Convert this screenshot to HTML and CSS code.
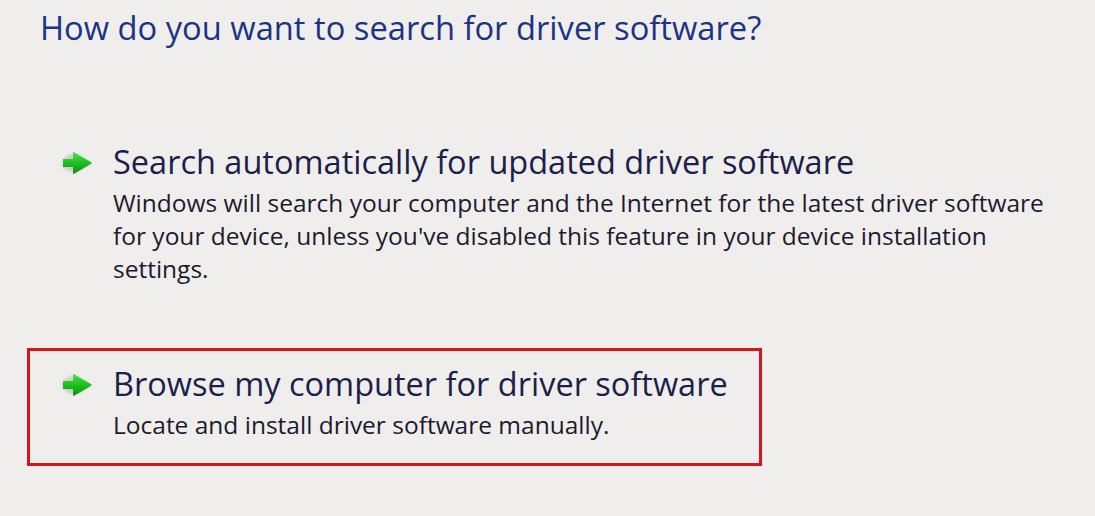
FILE: index.html
```html
<!DOCTYPE html>
<html lang="en">
<head>
    <meta charset="UTF-8">
    <title>Update Driver Software</title>
    <link rel="stylesheet" href="styles.css">
</head>
<body>
    <svg width="0" height="0" class="defs">
        <defs>
            <linearGradient id="arrowFill" x1="0" y1="0" x2="0" y2="1">
                <stop offset="0" stop-color="#4fe04f"/>
                <stop offset="0.5" stop-color="#1dbf1d"/>
                <stop offset="1" stop-color="#0c930c"/>
            </linearGradient>
            <radialGradient id="arrowGlow" cx="0.45" cy="0.5" r="0.5">
                <stop offset="0.6" stop-color="#cfcfcb"/>
                <stop offset="1" stop-color="#efeeec" stop-opacity="0"/>
            </radialGradient>
        </defs>
    </svg>

    <div class="page">
      <h1 class="heading">How do you want to search for driver software?</h1>

      <div class="options">
          <div class="option">
              <svg class="arrow" viewBox="0 0 34 26" width="34" height="26">
                  <ellipse cx="14" cy="13" rx="14" ry="12" fill="url(#arrowGlow)"/>
                  <path d="M3 9 H13 V3 Q13 1.5 14.5 2.5 L31 12 Q32.5 13 31 14 L14.5 23.5 Q13 24.5 13 23 V17 H3 Z" fill="url(#arrowFill)"/>
              </svg>
              <div class="option-text">
                  <div class="option-title">Search automatically for updated driver software</div>
                  <div class="option-desc">Windows will search your computer and the Internet for the latest driver software for your device, unless you've disabled this feature in your device installation settings.</div>
              </div>
          </div>

          <div class="option selected">
              <svg class="arrow" viewBox="0 0 34 26" width="34" height="26">
                  <ellipse cx="14" cy="13" rx="14" ry="12" fill="url(#arrowGlow)"/>
                  <path d="M3 9 H13 V3 Q13 1.5 14.5 2.5 L31 12 Q32.5 13 31 14 L14.5 23.5 Q13 24.5 13 23 V17 H3 Z" fill="url(#arrowFill)"/>
              </svg>
              <div class="option-text">
                  <div class="option-title">Browse my computer for driver software</div>
                  <div class="option-desc">Locate and install driver software manually.</div>
              </div>
          </div>
      </div>
    </div>
</body>
</html>
```

FILE: styles.css
```css
/* General Styles */
body {
    margin: 0;
    background: #efeeec;
    font-family: 'Open Sans', sans-serif;
    overflow: hidden;
}

.defs {
    position: absolute;
}

.page {
    padding: 8px 0 0 40px;
}

.heading {
    margin: 0;
    font-size: 32.7px;
    line-height: 40px;
    font-weight: 400;
    color: #1c3384; /* Vista blue */
}

.options {
    margin-top: 94px;
    display: flex;
    flex-direction: column;
    gap: 63px;
}

.option {
    display: flex;
    align-items: flex-start;
    gap: 19px;
    padding-left: 20px;
}

.arrow {
    margin-top: 8px;
    flex-shrink: 0;
}

.option-title {
    font-size: 32.5px;
    color: #1c1f4a;
    line-height: 40px;
}

.option-desc {
    margin-top: 4px;
    max-width: 945px;
    font-size: 24.5px;
    color: #1e1a2e;
    line-height: 33px;
}

/* the highlighted choice */
.option.selected {
    box-sizing: border-box;
    width: 735px;
    margin-left: -13px;
    padding: 13px 0 22px 30px;
    border: 3px solid #d8141b;
}
```
